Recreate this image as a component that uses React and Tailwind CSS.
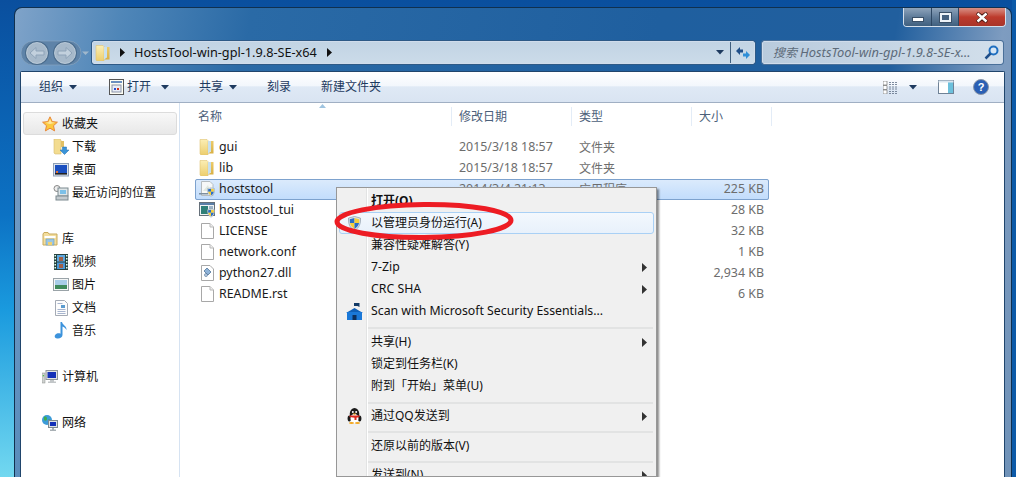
import React from "react";

const FONT = "font-['Noto_Sans','Noto_Sans_CJK_SC',sans-serif]";

function Caret({ className = "" }) {
  return (
    <svg width="8" height="5" viewBox="0 0 8 5" className={className}>
      <path d="M0 0h8L4 4.500z" fill="#1e3a5f" />
    </svg>
  );
}

function SubArrow() {
  return (
    <svg width="5" height="9" viewBox="0 0 5 9">
      <path d="M0 0l5 4.500L0 9z" fill="#333" />
    </svg>
  );
}

function Folder({ size = 16 }) {
  return (
    <svg width={size} height={size} viewBox="0 0 16 16">
      <defs>
        <linearGradient id="fa" x1="0" y1="0" x2="0" y2="1">
          <stop offset="0" stopColor="#fbeeb4" />
          <stop offset="1" stopColor="#ecce6e" />
        </linearGradient>
        <linearGradient id="fb" x1="0" y1="0" x2="0" y2="1">
          <stop offset="0" stopColor="#eccb6a" />
          <stop offset="1" stopColor="#d9b044" />
        </linearGradient>
      </defs>
      <path d="M1 0.500h7l1 1V16H2l-1-1z" fill="url(#fa)" stroke="#e0c574" strokeWidth="0.6" />
      <path d="M9 2h3v10l-3 3z" fill="#c8e0ee" />
      <path d="M12 2h2.500v12.500H9l3-2z" fill="url(#fb)" />
    </svg>
  );
}

function Star() {
  return (
    <svg width="16" height="16" viewBox="0 0 16 16">
      <path d="M8 .8l2.200 4.800 5.200.6-3.900 3.500 1.100 5.200L8 12.200 3.400 14.900l1.100-5.200L.6 6.200l5.200-.6z" fill="#fcc93f" stroke="#e8873a" strokeWidth="1" />
      <path d="M8 3l1.500 3.300 3.500.4L8 8 3.200 6.700l3.400-.4z" fill="#ffe9a0" />
    </svg>
  );
}

function Download() {
  return (
    <svg width="16" height="16" viewBox="0 0 16 16">
      <path d="M1 0h6l1 1v14H2l-1-1z" fill="#f3dc90" stroke="#d6bc6e" strokeWidth="0.6" />
      <path d="M8 2h3v6H8z" fill="#e2c064" />
      <path d="M9.500 8h4v3H16l-4.500 4.500L7 11h2.500z" fill="#3a94d8" stroke="#1f6fb0" strokeWidth="0.5" />
    </svg>
  );
}

function Desktop() {
  return (
    <svg width="16" height="14" viewBox="0 0 16 14">
      <rect x="0.500" y="0.500" width="15" height="12.500" fill="#dce4ee" stroke="#8f9fb5" />
      <rect x="2" y="2" width="12" height="8" fill="#1a4fc0" />
      <rect x="2" y="10" width="12" height="1.600" fill="#222" />
      <rect x="3" y="8" width="2" height="2" fill="#e0743a" />
    </svg>
  );
}

function Recent() {
  return (
    <svg width="16" height="16" viewBox="0 0 16 16">
      <circle cx="4" cy="3.500" r="3" fill="#eee" stroke="#888" />
      <rect x="5" y="3" width="10" height="8" fill="#dfe6e8" stroke="#7d8a90" />
      <rect x="7" y="5" width="6" height="4" fill="#7cc0e8" />
      <rect x="3" y="11" width="12" height="4" fill="#c4cbcf" stroke="#7d8a90" />
    </svg>
  );
}

function Library() {
  return (
    <svg width="16" height="14" viewBox="0 0 16 14">
      <path d="M1 2l1-1.500h4l1 1.500h8v11H1z" fill="#f3dd9c" stroke="#c9ab5c" />
      <path d="M2.500 4h11v2h-11z" fill="#fff" />
      <path d="M4 7h8v6H4z" fill="#9cc6e2" stroke="#6d9dbd" strokeWidth="0.6" />
      <path d="M6 10h4v3H6z" fill="#f0d070" />
    </svg>
  );
}

function Video() {
  return (
    <svg width="14" height="16" viewBox="0 0 14 16">
      <rect width="14" height="16" fill="#27413f" />
      <rect x="3" y="1" width="8" height="6.500" fill="#5ea8e0" />
      <rect x="3" y="8.500" width="8" height="6.500" fill="#4a98d8" />
      <rect x="5" y="3" width="4" height="4" fill="#a06048" />
      <rect x="5" y="10" width="4" height="4" fill="#a06048" />
      {[1, 4, 7, 10, 13].map((y) => (
        <g key={y}>
          <rect x="0.500" y={y} width="1.500" height="1.500" fill="#dfe" />
          <rect x="12" y={y} width="1.500" height="1.500" fill="#dfe" />
        </g>
      ))}
    </svg>
  );
}

function Picture() {
  return (
    <svg width="16" height="13" viewBox="0 0 16 13">
      <rect x="0.500" y="0.500" width="15" height="12" fill="#f4f6f6" stroke="#9aa3a8" />
      <rect x="2" y="2" width="12" height="5" fill="#a8cde8" />
      <rect x="2" y="7" width="12" height="4" fill="#3f8a5c" />
    </svg>
  );
}

function Doc() {
  return (
    <svg width="13" height="16" viewBox="0 0 13 16">
      <path d="M.5.5h9l3 3v12H.5z" fill="#fdfdfd" stroke="#a5abb5" />
      <path d="M2.500 3h5v1h-5zM2.500 9h8v1h-8zM2.500 11h8v1h-8zM2.500 13h8v1h-8z" fill="#a7b5cf" />
      <rect x="6" y="5" width="4" height="3" fill="#5c9cd0" />
    </svg>
  );
}

function Music() {
  return (
    <svg width="14" height="17" viewBox="0 0 14 17">
      <path d="M6.500 0h1.500c.5 3 5 4 4.500 8-1-2-2.500-3-4-3.500V13c0 2.500-3 4-5.500 3.500C.5 16 0 14 1.500 12.500c1.500-1.500 3.500-1.500 5-.8z" fill="#3d93dc" />
    </svg>
  );
}

function Computer() {
  return (
    <svg width="16" height="14" viewBox="0 0 16 14">
      <rect x="0" y="3" width="3" height="10" fill="#cfd2d0" stroke="#8a8f8d" strokeWidth="0.5" />
      <rect x="0.800" y="5" width="1.300" height="1.300" fill="#53c04a" />
      <rect x="4" y="0.500" width="11.500" height="9" fill="#e2e4e5" stroke="#90969a" />
      <rect x="5.500" y="2" width="8.500" height="6" fill="#1430b8" />
      <path d="M8 10h4v1.500h2V13H6v-1.500h2z" fill="#c2c6c8" />
    </svg>
  );
}

function Network() {
  return (
    <svg width="16" height="16" viewBox="0 0 16 16">
      <circle cx="5" cy="5" r="5" fill="#3c9bd8" />
      <path d="M2 2c2-1 3 0 3 2S3 6 2 5zM6 5c2-1 3 0 3 2L6 9z" fill="#3fae4a" />
      <rect x="6.500" y="5.500" width="9" height="7" fill="#dfe3e6" stroke="#7f8a92" />
      <rect x="8" y="7" width="6" height="4" fill="#1430b8" />
      <path d="M10 13h2v1.500h2V16H8v-1.500h2z" fill="#a9b0b5" />
    </svg>
  );
}

function Shield({ size = 13 }) {
  return (
    <svg width={size} height={size + 2} viewBox="0 0 12 13">
      <path d="M6 0l5.500 1.500c.3 5-1 9-5.500 11.500C1.500 10.500.2 6.500.5 1.500z" fill="#dde3e8" stroke="#6e7e8e" strokeWidth="0.5" />
      <path d="M6 1.500V6H1.800c0-1.500-.2-2.500-.2-3.500z" fill="#2a6ec8" />
      <path d="M6 1.500V6h4.200c.2-1.500.2-2.500.2-3.500z" fill="#f4cf3a" />
      <path d="M6 6v5.500C4 10.300 2.400 8.500 1.800 6z" fill="#f4cf3a" />
      <path d="M6 6v5.500c2-1.200 3.600-3 4.200-5.500z" fill="#2a6ec8" />
    </svg>
  );
}

function BlankFile() {
  return (
    <svg width="13" height="16" viewBox="0 0 13 16">
      <path d="M.5.5h8.500l3.500 3.500v11.500H.5z" fill="#fff" stroke="#a8a8a8" />
      <path d="M9 .5V4h3.500" fill="#eee" stroke="#b8b8b8" />
    </svg>
  );
}

function FileIcon({ type }) {
  if (type === "folder") return <Folder />;
  if (type === "exe")
    return (
      <div className="relative w-[16px] h-[16px]">
        <svg width="15" height="15" viewBox="0 0 15 15">
          <path d="M2.500.5h8.500l3 3v11H2.500z" fill="#f6f8f8" stroke="#b5bcc0" />
          <path d="M4 10l5-6 2 6z" fill="#dfe8e0" />
          <rect x="0" y="12" width="9" height="1.500" fill="#7d8fa0" />
        </svg>
        <div className="absolute right-0 bottom-0">
          <Shield size={8} />
        </div>
      </div>
    );
  if (type === "tui")
    return (
      <div className="relative w-[16px] h-[16px]">
        <svg width="16" height="14" viewBox="0 0 16 14">
          <rect x="0.500" y="0.500" width="15" height="13" fill="#f0f2f4" stroke="#66707a" />
          <rect x="1" y="1" width="14" height="2" fill="#5a7fa8" />
          <rect x="2" y="4" width="7" height="8" fill="#2f7f78" />
          <rect x="10" y="4" width="4" height="3" fill="#9db4c8" />
        </svg>
        <div className="absolute right-0 bottom-0">
          <Shield size={8} />
        </div>
      </div>
    );
  if (type === "dll")
    return (
      <svg width="13" height="16" viewBox="0 0 13 16">
        <path d="M.5.5h8.500l3.500 3.500v11.500H.5z" fill="#fff" stroke="#a8a8a8" />
        <path d="M3 6l3-3 4 4-3 3z" fill="#8fb3d8" stroke="#44688f" strokeWidth="0.7" />
        <circle cx="5" cy="10" r="1.500" fill="#c2d4e8" stroke="#44688f" strokeWidth="0.6" />
      </svg>
    );
  return <BlankFile />;
}

function Mse() {
  return (
    <svg width="17" height="17" viewBox="0 0 17 17">
      <path d="M8.500 5L17 10H0z" fill="#0f60b8" />
      <rect x="1" y="9" width="15" height="8" fill="#1a78d8" />
      <rect x="6.500" y="12" width="4" height="5" fill="#0c2f5c" />
      <path d="M8 0h5.500v4l-2-1H8z" fill="#123a66" />
    </svg>
  );
}

function Penguin() {
  return (
    <svg width="15" height="16" viewBox="0 0 15 16">
      <ellipse cx="7.500" cy="6" rx="4.800" ry="6" fill="#1a1a1a" />
      <ellipse cx="2.300" cy="10.500" rx="1.700" ry="3" fill="#1a1a1a" />
      <ellipse cx="12.700" cy="10.500" rx="1.700" ry="3" fill="#1a1a1a" />
      <ellipse cx="7.500" cy="10.500" rx="4" ry="4.500" fill="#fff" />
      <circle cx="5.800" cy="4" r="1" fill="#fff" />
      <circle cx="9.200" cy="4" r="1" fill="#fff" />
      <path d="M5.500 5.500h4L7.500 7z" fill="#f4a81e" />
      <path d="M2.500 7.500h10v1.500l-3 .7V12H7.500V9.700l-5-.7z" fill="#dc2a1e" />
      <ellipse cx="4.500" cy="15" rx="2.500" ry="1" fill="#f4a81e" />
      <ellipse cx="10.500" cy="15" rx="2.500" ry="1" fill="#f4a81e" />
    </svg>
  );
}

const FILES = [
  { name: "gui", type: "folder", date: "2015/3/18 18:57", kind: "文件夹", size: "" },
  { name: "lib", type: "folder", date: "2015/3/18 18:57", kind: "文件夹", size: "" },
  { name: "hoststool", type: "exe", date: "2014/3/4 21:13", kind: "应用程序", size: "225 KB", selected: true },
  { name: "hoststool_tui", type: "tui", date: "", kind: "", size: "28 KB" },
  { name: "LICENSE", type: "file", date: "", kind: "", size: "32 KB" },
  { name: "network.conf", type: "file", date: "", kind: "", size: "1 KB" },
  { name: "python27.dll", type: "dll", date: "", kind: "", size: "2,934 KB" },
  { name: "README.rst", type: "file", date: "", kind: "", size: "6 KB" },
];

function NavRow({ icon, label, sub, head }) {
  return (
    <div
      className={
        "h-[23px] flex items-center " +
        (head
          ? "mx-[2px] rounded-[3px] border border-[#dcdcdc] bg-gradient-to-b from-[#f8f8f8] to-[#e8e8e8]"
          : "")
      }
    >
      <div
        className={
          "flex items-center justify-center w-[16px] shrink-0 " +
          (head ? "ml-[18px]" : sub ? "ml-[32px]" : "ml-[21px]")
        }
      >
        {icon}
      </div>
      <span className={"text-[12px] text-[#111] " + (sub ? "ml-[3px]" : "ml-[4px]")}>{label}</span>
    </div>
  );
}

function MenuItem({ icon, label, arrow, bold, active, latin }) {
  return (
    <div
      className={
        "relative h-[22px] flex items-center mx-[2px] rounded-[3px] border " +
        (active
          ? "border-[#a9d0f5] bg-gradient-to-b from-[#f3f8fd] to-[#e8f1fb]"
          : "border-transparent")
      }
    >
      <div className="w-[28px] flex justify-center shrink-0">{icon}</div>
      <span className={"ml-[3px] text-[#111] " + (latin ? "text-[12.300px] " : "text-[12px] ") + (bold ? "font-bold" : "")}>
        {label}
      </span>
      {arrow && (
        <div className="ml-auto mr-[6px]">
          <SubArrow />
        </div>
      )}
    </div>
  );
}

function MenuSep({ cls }) {
  return <div className={"ml-[30px] mr-[3px] " + cls} />;
}

export default function App() {
  return (
    <div
      className={
        FONT +
        " relative w-[1016px] h-[477px] overflow-hidden pl-[14px] pt-[7px] bg-[linear-gradient(180deg,#0a4f9e_0%,#0c72c4_45%,#1a9ade_65%,#72d8f0_100%)]"
      }
    >
      {/* right side of the desktop is darker */}
      <div className="absolute right-0 top-0 w-[4px] h-full bg-[#0c5aa8]" />

      <div className="relative w-[998px] h-[470px] rounded-t-[8px] border border-[#10304f] border-b-0 pl-[5px] pr-[6px] bg-[linear-gradient(100deg,#7fa3c9_0%,#4f86b8_10%,#2a6aa6_22%,#1f5f9f_60%,#215f9e_82%,#7e9cc0_92%,#6f92b8_100%)]">
        {/* title bar buttons */}
        <div className="h-[33px] flex justify-end items-start">
          <div className="flex h-[19px] rounded-b-[4px] border border-t-0 border-[#d5e0ec] overflow-hidden -mr-[1px]">
            <div className="w-[28px] flex items-center justify-center bg-gradient-to-b from-[#8ea4bb] via-[#5f7c9a] to-[#40607f] border-r border-[#2d4763]">
              <div className="w-[12px] h-[5px] mt-[4px] bg-white border border-[#3a5068]" />
            </div>
            <div className="w-[27px] flex items-center justify-center bg-gradient-to-b from-[#8ea4bb] via-[#5f7c9a] to-[#40607f] border-r border-[#2d4763]">
              <div className="w-[11px] h-[9px] bg-[#45617f] border-2 border-[#eef3f8] outline outline-[#3a5068]" />
            </div>
            <div className="w-[46px] flex items-center justify-center bg-gradient-to-b from-[#d68f86] via-[#bd3a2c] to-[#a8352a]">
              <svg width="14" height="11" viewBox="0 0 14 11">
                <path d="M2 1l5 3.500L12 1M2 10l5-3.500 5 3.500M2 1l10 9M12 1L2 10" fill="none" stroke="#4a1a14" strokeWidth="3.500" />
                <path d="M2.500 1.500l9 8M11.500 1.500l-9 8" fill="none" stroke="#fff" strokeWidth="2.400" />
              </svg>
            </div>
          </div>
        </div>

        {/* back / address / search */}
        <div className="h-[23px] flex items-center">
          <svg width="71" height="28" viewBox="0 0 71 28" className="shrink-0">
            <rect x="1" y="2" width="60" height="24" rx="12" fill="#5e83a8" stroke="#8fa9c2" strokeWidth="0.6" />
            <circle cx="17" cy="14" r="12" fill="#4b6c8d" />
            <circle cx="45" cy="14" r="12" fill="#4b6c8d" />
            <circle cx="17" cy="14" r="10.500" fill="#a7b9ca" stroke="#c7d4e0" strokeWidth="0.8" />
            <circle cx="45" cy="14" r="10.500" fill="#a7b9ca" stroke="#c7d4e0" strokeWidth="0.8" />
            <path d="M10 14l6-5.500v3.500h8v4h-8v3.500z" fill="#c2d0dd" stroke="#8ea3b8" />
            <path d="M52 14l-6-5.500v3.500h-8v4h8v3.500z" fill="#c2d0dd" stroke="#8ea3b8" />
            <path d="M62 12.500h7l-3.500 3.500z" fill="#a0b8cc" />
          </svg>

          <div className="ml-[1px] w-[663px] h-[23px] flex items-center rounded-[2px] border border-[#d0dceb] bg-gradient-to-b from-[#c2d4e4] to-[#cbdbe9] outline outline-[#2e5a86]">
            <div className="ml-[2px]">
              <Folder />
            </div>
            <svg width="5" height="9" viewBox="0 0 5 9" className="ml-[9px]">
              <path d="M0 0l5 4.500L0 9z" fill="#111" />
            </svg>
            <span className="ml-[9px] text-[12.700px] text-[#111] whitespace-nowrap">HostsTool-win-gpl-1.9.8-SE-x64</span>
            <svg width="5" height="9" viewBox="0 0 5 9" className="ml-[10px]">
              <path d="M0 0l5 4.500L0 9z" fill="#111" />
            </svg>
            <Caret className="ml-auto mr-[6px]" />
            <div className="w-[24px] h-full border-l border-[#3f5f7f] flex items-center justify-center">
              <svg width="16" height="14" viewBox="0 0 16 14">
                <path d="M1 5l4-4v2.500h3v3H5V9z" fill="#1f4f8a" />
                <path d="M15 9l-4 4v-2.500H8v-3h3V5z" fill="#2f8fd8" />
              </svg>
            </div>
          </div>

          <div className="ml-[7px] w-[241px] h-[23px] flex items-center rounded-[2px] border border-[#d0dceb] bg-gradient-to-r from-[#b9cbdd] to-[#d2dfeb] outline outline-[#4a7099]">
            <span className="ml-[10px] text-[12px] italic text-[#5d6b7a] whitespace-nowrap">搜索</span>
            <span className="ml-[3px] text-[12.900px] italic text-[#5d6b7a] whitespace-nowrap">HostsTool-win-gpl-1.9.8-SE-x...</span>
            <svg width="15" height="15" viewBox="0 0 15 15" className="ml-auto mr-[3px]">
              <circle cx="9.500" cy="5.500" r="4" fill="#d6e6f5" stroke="#1f6fc0" strokeWidth="2" />
              <path d="M6.500 8.500L1.500 13.500" stroke="#1f4f8a" strokeWidth="2.500" />
            </svg>
          </div>
        </div>

        {/* explorer panel */}
        <div className="mt-[7px] w-[985px] h-[407px] bg-white border border-[#20456c] border-b-0 rounded-t-[2px] flex flex-col">
          {/* toolbar */}
          <div className="h-[31px] shrink-0 flex items-center text-[12px] text-[#1e3a5f] border-b border-[#a0afc3] bg-[linear-gradient(180deg,#ffffff_0%,#f3f7fc_45%,#dfe9f5_50%,#d9e4f2_100%)]">
            <span className="ml-[18px]">组织</span>
            <Caret className="ml-[6px]" />
            <svg width="15" height="16" viewBox="0 0 15 16" className="ml-[32px]">
              <rect x="0.500" y="0.500" width="14" height="15" fill="#fdfdf4" stroke="#555" />
              <rect x="2" y="2" width="11" height="2" fill="#6a8fc0" />
              <rect x="3" y="6" width="9" height="7" fill="#e8ecf6" stroke="#8a93a8" />
              <path d="M5 9h2v2H5z" fill="#2a4fd0" />
              <path d="M8 9h2v2H8z" fill="#c83020" />
            </svg>
            <span className="ml-[3px]">打开</span>
            <Caret className="ml-[10px]" />
            <span className="ml-[30px]">共享</span>
            <Caret className="ml-[6px]" />
            <span className="ml-[30px]">刻录</span>
            <span className="ml-[30px]">新建文件夹</span>
            <svg width="15" height="13" viewBox="0 0 15 13" className="ml-auto">
              <path d="M0 0h4v4H0zM0 4.500h4v4H0zM0 9h4v4H0z" fill="#fff" stroke="#777" strokeWidth="0.7" />
              <path d="M6 1.500h9M6 3.500h9M6 6h9M6 8h9M6 10.500h9M6 12.500h9" stroke="#5f6f85" strokeWidth="0.8" strokeDasharray="2 1" />
            </svg>
            <Caret className="ml-[11px]" />
            <svg width="16" height="14" viewBox="0 0 16 14" className="ml-[21px]">
              <rect x="0.500" y="0.500" width="15" height="13" fill="#fff" stroke="#6f8296" />
              <rect x="10" y="1" width="5" height="12" fill="#6cc0dc" />
              <rect x="0.500" y="0.500" width="15" height="2" fill="#dbe6f0" />
            </svg>
            <svg width="16" height="16" viewBox="0 0 16 16" className="ml-[19px] mr-[15px]">
              <circle cx="8" cy="8" r="7.500" fill="#2a5fb4" stroke="#8a96a8" />
              <text x="8" y="12" textAnchor="middle" fontSize="11" fontWeight="700" fontFamily="Liberation Sans" fill="#fff">?</text>
            </svg>
          </div>

          <div className="flex-1 flex min-h-0">
            {/* navigation pane */}
            <div className="w-[159px] shrink-0 border-r border-[#d6e3f2] pt-[9px]">
              <NavRow head icon={<Star />} label="收藏夹" />
              <NavRow sub icon={<Download />} label="下载" />
              <NavRow sub icon={<Desktop />} label="桌面" />
              <NavRow sub icon={<Recent />} label="最近访问的位置" />
              <div className="h-[23px]" />
              <NavRow icon={<Library />} label="库" />
              <NavRow sub icon={<Video />} label="视频" />
              <NavRow sub icon={<Picture />} label="图片" />
              <NavRow sub icon={<Doc />} label="文档" />
              <NavRow sub icon={<Music />} label="音乐" />
              <div className="h-[23px]" />
              <NavRow icon={<Computer />} label="计算机" />
              <div className="h-[23px]" />
              <NavRow icon={<Network />} label="网络" />
            </div>

            {/* file list */}
            <div className="flex-1 min-w-0">
              <div className="relative h-[23px] pt-[4px] flex text-[12px] text-[#4c607a]">
                <div className="w-[272px] pl-[18px] flex items-center border-r border-[#e3ecf7]">名称</div>
                <div className="w-[120px] pl-[7px] flex items-center border-r border-[#e3ecf7]">修改日期</div>
                <div className="w-[120px] pl-[7px] flex items-center border-r border-[#e3ecf7]">类型</div>
                <div className="w-[80px] pl-[7px] flex items-center border-r border-[#e3ecf7]">大小</div>
                <svg width="7" height="4" viewBox="0 0 7 4" className="absolute left-[139px] top-[1px]">
                  <path d="M3.500 0L7 4H0z" fill="#9fc4e0" />
                </svg>
              </div>
              <div className="ml-[15px] mt-[11px] w-[574px]">
                {FILES.map((f) => (
                  <div
                    key={f.name}
                    className={
                      "h-[21px] grid grid-cols-[264px_120px_120px_70px] items-center text-[12.400px] rounded-[2px] " +
                      (f.selected
                        ? "outline outline-[#7da2ce] -outline-offset-1 bg-gradient-to-b from-[#dcebfc] to-[#c1dcfc]"
                        : "")
                    }
                  >
                    <div className="flex items-center pl-[4px]">
                      <div className="w-[16px] flex justify-center">
                        <FileIcon type={f.type} />
                      </div>
                      <span className="ml-[4px] text-[#1a1a1a]">{f.name}</span>
                    </div>
                    <span className="text-[#6d6d6d]">{f.date}</span>
                    <span className="text-[12px] text-[#6d6d6d]">{f.kind}</span>
                    <span className="text-right pr-[5px] text-[#6d6d6d]">{f.size}</span>
                  </div>
                ))}
              </div>
            </div>
          </div>
        </div>
      </div>

      {/* context menu */}
      <div className="absolute left-[336px] top-[187px] w-[321px] h-[290px] bg-[#f0f0f0] border border-[#979797] pt-[2px] shadow-[2px_2px_2px_rgba(0,0,0,0.45)] overflow-hidden">
        <div className="absolute left-[29px] top-0 bottom-0 w-[2px] bg-[#e2e3e3] border-r border-white" />
        <MenuItem bold label="打开(O)" />
        <MenuItem active icon={<Shield />} label="以管理员身份运行(A)" />
        <MenuItem label="兼容性疑难解答(Y)" />
        <MenuItem arrow latin label="7-Zip" />
        <MenuItem arrow latin label="CRC SHA" />
        <MenuItem latin icon={<Mse />} label="Scan with Microsoft Security Essentials..." />
        <MenuSep cls="mt-[5px] mb-[2px] h-[2px] bg-[#e2e3e3]" />
        <MenuItem arrow label="共享(H)" />
        <MenuItem label="锁定到任务栏(K)" />
        <MenuItem label="附到「开始」菜单(U)" />
        <MenuSep cls="mt-[5px] mb-[1px] h-[2px] bg-[#e2e3e3]" />
        <MenuItem arrow icon={<Penguin />} label="通过QQ发送到" />
        <MenuSep cls="mt-[4px] mb-[2px] h-[2px] bg-[#e2e3e3]" />
        <MenuItem label="还原以前的版本(V)" />
        <MenuSep cls="mt-[4px] mb-[1px] h-[2px] bg-[#e2e3e3]" />
        <MenuItem arrow label="发送到(N)" />
      </div>

      {/* red marker circled on the screenshot */}
      <svg width="184" height="44" viewBox="0 0 184 44" className="absolute left-[333px] top-[200px] pointer-events-none">
        <ellipse cx="91" cy="21" rx="87" ry="16.500" fill="none" stroke="#ed1c24" strokeWidth="5" transform="rotate(-0.5 91 21)" />
      </svg>
    </div>
  );
}
